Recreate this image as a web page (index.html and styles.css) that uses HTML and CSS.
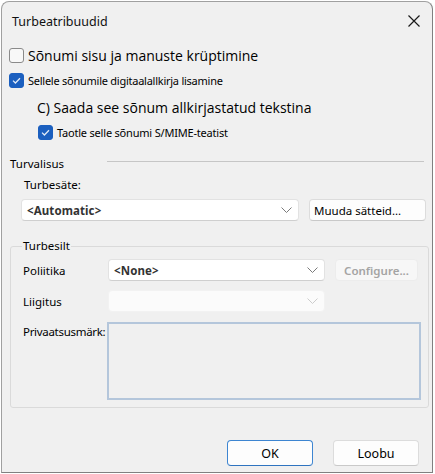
FILE: index.html
```html
<!DOCTYPE html>
<html>
<head>
<meta charset="utf-8">
<link rel="stylesheet" href="styles.css">
</head>
<body>
<div class="window">
  <div class="titlebar">
    <span class="title">Turbeatribuudid</span>
    <svg class="close" width="12" height="12" viewBox="0 0 12 12"><path d="M0.5 0.5 L11.5 11.5 M11.5 0.5 L0.5 11.5" stroke="#1a1a1a" stroke-width="1.2" fill="none"/></svg>
  </div>
  <div class="content">
    <label class="row r1"><span class="cb"></span><span class="big">Sõnumi sisu ja manuste krüptimine</span></label>
    <label class="row r2"><span class="cb on"><svg width="15" height="15" viewBox="0 0 15 15"><path d="M4 7.6 L6.4 10 L11 5.2" stroke="#dfe9f7" stroke-width="1.3" fill="none"/></svg></span><span class="small">Sellele sõnumile digitaalallkirja lisamine</span></label>
    <div class="row r3"><span class="big">C) Saada see sõnum allkirjastatud tekstina</span></div>
    <label class="row r4"><span class="cb on"><svg width="15" height="15" viewBox="0 0 15 15"><path d="M4 7.6 L6.4 10 L11 5.2" stroke="#dfe9f7" stroke-width="1.3" fill="none"/></svg></span><span class="small wide-sp">Taotle selle sõnumi S/MIME-teatist</span></label>

    <div class="section-head"><span>Turvalisus</span><span class="rule"></span></div>
    <div class="lbl-setting">Turbesäte:</div>
    <div class="setting-row">
      <div class="select wide"><span class="val">&lt;Automatic&gt;</span><svg class="chev" width="11" height="6" viewBox="0 0 11 6"><path d="M0.5 0.5 L5.5 5.5 L10.5 0.5" stroke="#7a7a7a" stroke-width="1" fill="none"/></svg></div>
      <div class="btn change">Muuda sätteid...</div>
    </div>

    <fieldset class="group">
      <legend>Turbesilt</legend>
      <div class="grow g1">
        <span class="glabel">Poliitika</span>
        <div class="select mid"><span class="val">&lt;None&gt;</span><svg class="chev" width="11" height="6" viewBox="0 0 11 6"><path d="M0.5 0.5 L5.5 5.5 L10.5 0.5" stroke="#7a7a7a" stroke-width="1" fill="none"/></svg></div>
        <div class="btn configure">Configure...</div>
      </div>
      <div class="grow g2">
        <span class="glabel">Liigitus</span>
        <div class="select mid disabled"><span class="val"></span><svg class="chev" width="11" height="6" viewBox="0 0 11 6"><path d="M0.5 0.5 L5.5 5.5 L10.5 0.5" stroke="#cccccc" stroke-width="1" fill="none"/></svg></div>
      </div>
      <div class="grow g3">
        <span class="glabel">Privaatsusmärk:</span>
        <div class="textarea"></div>
      </div>
    </fieldset>

    <div class="footer">
      <div class="btn ok">OK</div>
      <div class="btn cancel">Loobu</div>
    </div>
  </div>
</div>
</body>
</html>
```

FILE: styles.css
```css
html, body {
  margin: 0;
  padding: 0;
  background: #ffffff;
}
body {
  font-family: "Noto Sans", "Open Sans", sans-serif;
  color: #000;
  font-size: 11.5px;
}
.window {
  margin: 1px 0 0 1px;
  width: 432px;
  height: 472px;
  box-sizing: border-box;
  border: 1px solid #a0a0a0;
  border-right-color: #808080;
  border-bottom-color: #808080;
  border-radius: 8px 8px 0 0;
  background: #f0f0f0;
  overflow: hidden;
}
.titlebar {
  height: 38px;
  display: flex;
  align-items: center;
  justify-content: space-between;
  padding: 0 12px 0 10px;
}
.title {
  font-size: 12.5px;
  color: #111;
}
.close { display: block; }
.content {
  padding: 0 0 0 7px;
}
.row {
  display: flex;
  align-items: center;
}
.r1 { height: 16px; margin-top: 7px; }
.r2 { height: 16px; margin-top: 9px; }
.r3 { height: 20px; margin-top: 9px; padding-left: 28px; }
.r4 { height: 16px; margin-top: 7px; padding-left: 29px; }
.cb {
  width: 15px;
  height: 15px;
  box-sizing: border-box;
  border-radius: 3px;
  border: 1px solid #8a8a8a;
  background: #f8f8f8;
  margin-right: 4px;
  flex: none;
}
.cb svg { display: block; margin: -1px; }
.cb.on {
  background: #1b5fbf;
  border-color: #1b5fbf;
}
.big {
  font-size: 14px;
  font-family: "Open Sans", sans-serif;
}
.small {
  font-size: 11px;
  letter-spacing: -0.25px;
}
.small.wide-sp {
  letter-spacing: -0.2px;
}
.section-head {
  display: flex;
  align-items: center;
  height: 16px;
  margin-top: 15px;
  padding-left: 1px;
}
.section-head .rule {
  flex: 1;
  height: 1px;
  background: #c6c6c6;
  margin: -3px 8px 0 43px;
}
.lbl-setting {
  margin-top: 6px;
  padding-left: 15px;
  height: 16px;
  line-height: 16px;
}
.setting-row {
  display: flex;
  margin-top: 6px;
  padding-left: 12px;
  gap: 10px;
}
.select {
  height: 22px;
  box-sizing: border-box;
  background: #fff;
  border: 1px solid #e2e2e2;
  border-bottom-color: #cfcfcf;
  border-radius: 4px;
  display: flex;
  align-items: center;
  justify-content: space-between;
  padding: 0 6px 0 5px;
}
.select .val {
  font-weight: 700;
  color: #333;
  font-size: 11.5px;
  letter-spacing: 0.1px;
}
.select.wide { width: 278px; }
.select.mid { width: 217px; }
.select.disabled {
  background: #fbfbfb;
  border-color: #f2f2f2;
}
.btn {
  box-sizing: border-box;
  height: 22px;
  background: #fdfdfd;
  border: 1px solid #dcdcdc;
  border-bottom-color: #c9c9c9;
  border-radius: 4px;
  display: flex;
  align-items: center;
  font-size: 11.5px;
}
.change {
  width: 117px;
  padding-left: 4px;
}
.group {
  margin: 18px 0 0 1px;
  width: 419px;
  height: 169px;
  box-sizing: border-box;
  border: 1px solid #dadada;
  border-radius: 3px;
  padding: 0 0 0 12px;
}
.group legend {
  padding: 0 1px;
  margin-left: -1px;
  font-size: 11.5px;
  line-height: 14px;
}
.grow {
  display: flex;
  align-items: center;
}
.glabel {
  width: 85px;
  flex: none;
}
.g1 { margin-top: 6px; }
.g2 { margin-top: 9px; }
.g3 { margin-top: 10px; align-items: flex-start; }
.configure {
  width: 83px;
  margin-left: 10px;
  color: #a4a4a4;
  justify-content: center;
  font-weight: 600;
  background: #f7f7f7;
  border-color: #ececec;
}
.g3 .glabel { margin-top: 2px; letter-spacing: -0.3px; }
.textarea {
  width: 314px;
  height: 78px;
  box-sizing: border-box;
  border: 2px solid #b4c6db;
  background: #f0f0f0;
  margin-left: -1px;
}
.footer {
  display: flex;
  justify-content: flex-end;
  gap: 20px;
  margin-top: 32px;
  padding-right: 13px;
}
.footer .btn {
  width: 86px;
  height: 26px;
  justify-content: center;
  font-size: 12.5px;
}
.ok {
  border: 1px solid #3d85d1;
  border-bottom-color: #2f74c0;
}
```
